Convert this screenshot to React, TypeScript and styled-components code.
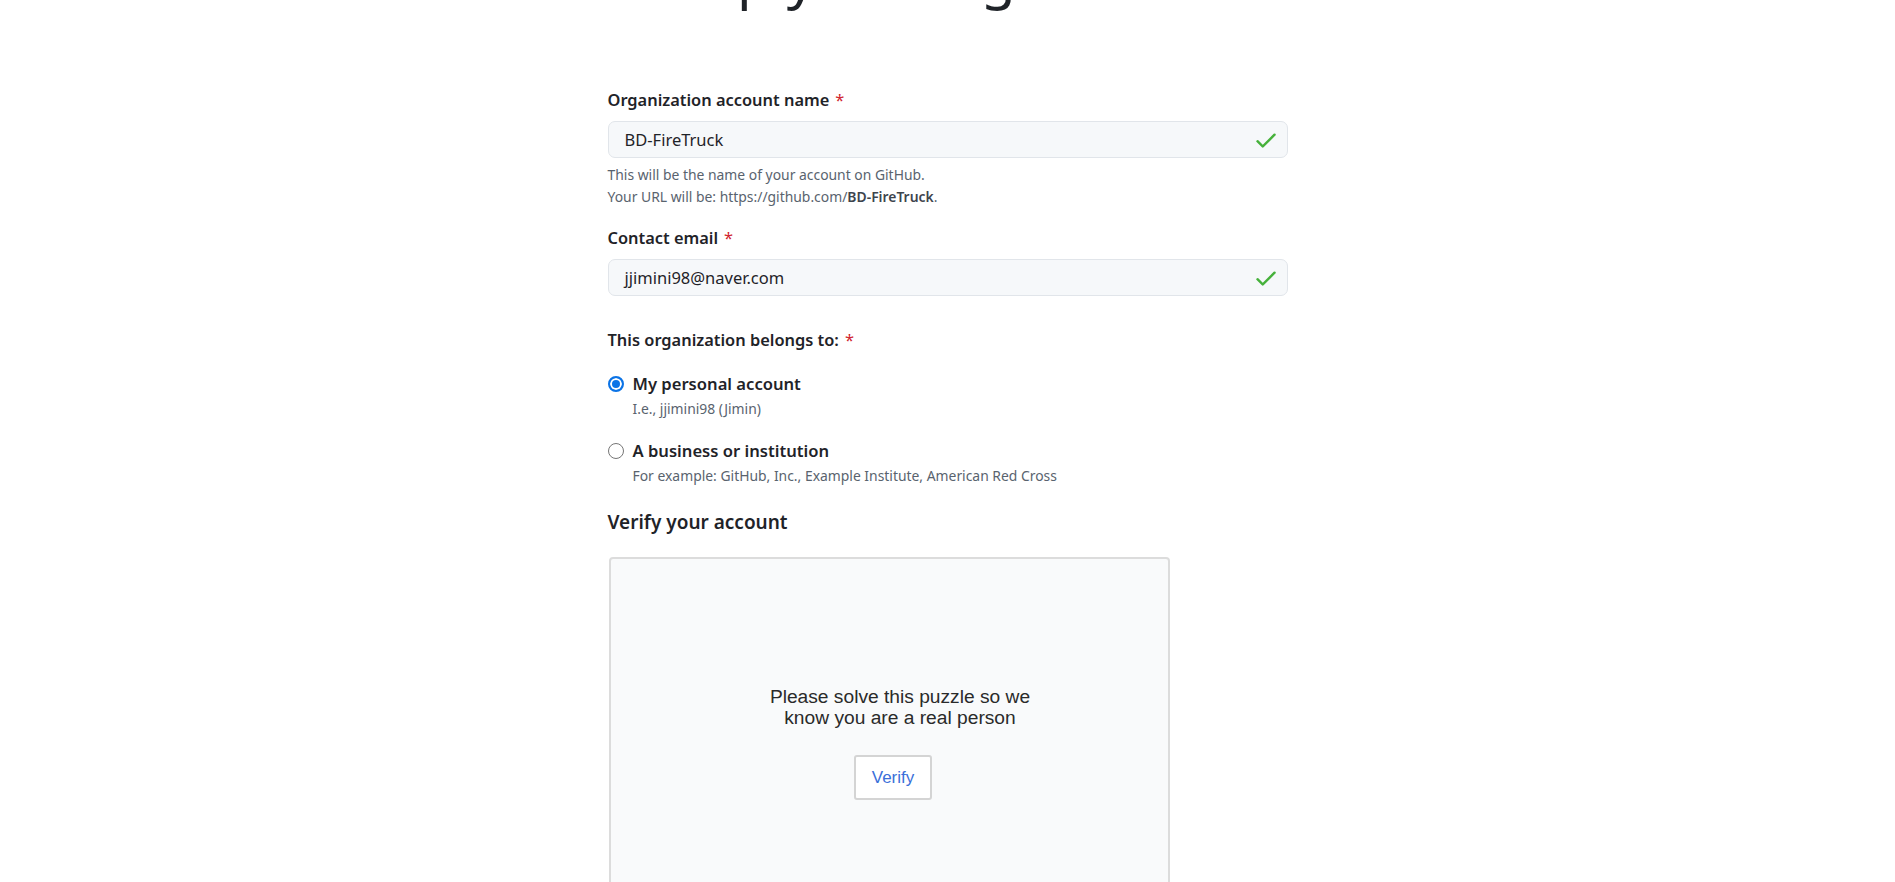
import React from 'react';
import styled, { createGlobalStyle } from 'styled-components';

const GlobalStyle = createGlobalStyle`
  html, body {
    margin: 0;
    padding: 0;
    background: #ffffff;
    overflow: hidden;
  }
  body {
    font-family: "Noto Sans", "Open Sans", sans-serif;
    color: #1f2328;
  }
`;

const Page = styled.div`
  display: flex;
  justify-content: center;
  height: 882px;
  overflow: hidden;
`;

const Container = styled.div`
  width: 680px;
  display: flex;
  flex-direction: column;
`;

const Title = styled.h1`
  margin: -60px 0 78px -4px;
  font-size: 56.8px;
  line-height: 70px;
  font-weight: 400;
  color: #1f2328;
  white-space: nowrap;
`;

const Group = styled.div<{ gap?: number }>`
  display: flex;
  flex-direction: column;
  margin-bottom: ${p => p.gap ?? 0}px;
`;

const Label = styled.label`
  font-size: 16.4px;
  line-height: 24px;
  font-weight: 600;
  color: #1f2328;
`;

const Required = styled.span`
  color: #d1242f;
  margin-left: 6px;
  font-weight: 400;
`;

const InputWrap = styled.div`
  margin-top: 9px;
  height: 37px;
  box-sizing: border-box;
  display: flex;
  align-items: center;
  justify-content: space-between;
  padding: 0 8px 0 16px;
  background: #f6f8fa;
  border: 1px solid #e1e5ea;
  border-radius: 7px;
`;

const InputText = styled.span`
  font-size: 16.5px;
  color: #1f2328;
`;

const Note = styled.p<{ first?: boolean }>`
  margin: ${p => (p.first ? '6px' : '0')} 0 0;
  font-size: 13.9px;
  line-height: 22px;
  color: #59636e;
  b {
    font-weight: 600;
    color: #3d444d;
  }
`;

const RadioRow = styled.div`
  display: flex;
  align-items: center;
  gap: 9px;
`;

const Radio = styled.span<{ checked?: boolean }>`
  width: 16px;
  height: 16px;
  box-sizing: border-box;
  border-radius: 50%;
  flex-shrink: 0;
  background: ${p => (p.checked ? '#0b73e6' : '#ffffff')};
  border: ${p => (p.checked ? '2px solid #0b73e6' : '1px solid #767676')};
  box-shadow: ${p => (p.checked ? 'inset 0 0 0 2px #ffffff' : 'none')};
`;

const RadioLabel = styled.span`
  font-size: 16.6px;
  line-height: 24px;
  font-weight: 600;
  color: #1f2328;
`;

const RadioNote = styled.p`
  margin: 3px 0 0 25px;
  font-size: 13.9px;
  line-height: 20px;
  color: #59636e;
`;

const SectionTitle = styled.h2`
  margin: 0 0 21px;
  font-size: 19px;
  line-height: 28px;
  font-weight: 600;
  color: #1f2328;
`;

const Captcha = styled.div`
  width: 561px;
  height: 480px;
  flex-shrink: 0;
  box-sizing: border-box;
  margin-left: 1px;
  background: #f9fafb;
  border: 2px solid #dcdcdc;
  border-radius: 4px;
  display: flex;
  flex-direction: column;
  align-items: center;
  padding-top: 127px;
  font-family: "Liberation Sans", Arial, sans-serif;
`;

const PuzzleText = styled.p`
  margin: 0 0 0 22px;
  font-size: 19.2px;
  line-height: 21px;
  text-align: center;
  color: #2a2a2a;
  width: 290px;
`;

const VerifyButton = styled.button`
  margin: 27px 0 0 8px;
  width: 78px;
  height: 45px;
  background: #ffffff;
  border: 2px solid #d4d4d4;
  border-radius: 3px;
  font-family: "Liberation Sans", Arial, sans-serif;
  font-size: 17px;
  color: #3a6fd9;
  cursor: pointer;
`;

const Check = () => (
  <svg width="26" height="26" viewBox="0 0 16 16" fill="#46b13b">
    <path d="M13.78 4.22a.75.75 0 0 1 0 1.06l-7.25 7.25a.75.75 0 0 1-1.06 0L2.22 9.28a.751.751 0 0 1 .018-1.042.751.751 0 0 1 1.042-.018L6 10.94l6.72-6.72a.75.75 0 0 1 1.06 0Z" />
  </svg>
);

export default function App() {
  return (
    <>
      <GlobalStyle />
      <Page>
        <Container>
          <Title>Set up your organization</Title>

          <Group gap={18}>
            <Label>
              Organization account name<Required>*</Required>
            </Label>
            <InputWrap>
              <InputText>BD-FireTruck</InputText>
              <Check />
            </InputWrap>
            <Note first>This will be the name of your account on GitHub.</Note>
            <Note>
              Your URL will be: https://github.com/<b>BD-FireTruck</b>.
            </Note>
          </Group>

          <Group gap={32}>
            <Label>
              Contact email<Required>*</Required>
            </Label>
            <InputWrap>
              <InputText>jjimini98@naver.com</InputText>
              <Check />
            </InputWrap>
          </Group>

          <Group gap={20}>
            <Label>
              This organization belongs to:<Required>*</Required>
            </Label>
          </Group>

          <Group gap={20}>
            <RadioRow>
              <Radio checked />
              <RadioLabel>My personal account</RadioLabel>
            </RadioRow>
            <RadioNote>I.e., jjimini98 (Jimin)</RadioNote>
          </Group>

          <Group gap={22}>
            <RadioRow>
              <Radio />
              <RadioLabel>A business or institution</RadioLabel>
            </RadioRow>
            <RadioNote>For example: GitHub, Inc., Example Institute, American Red Cross</RadioNote>
          </Group>

          <SectionTitle>Verify your account</SectionTitle>

          <Captcha>
            <PuzzleText>Please solve this puzzle so we know you are a real person</PuzzleText>
            <VerifyButton>Verify</VerifyButton>
          </Captcha>
        </Container>
      </Page>
    </>
  );
}
